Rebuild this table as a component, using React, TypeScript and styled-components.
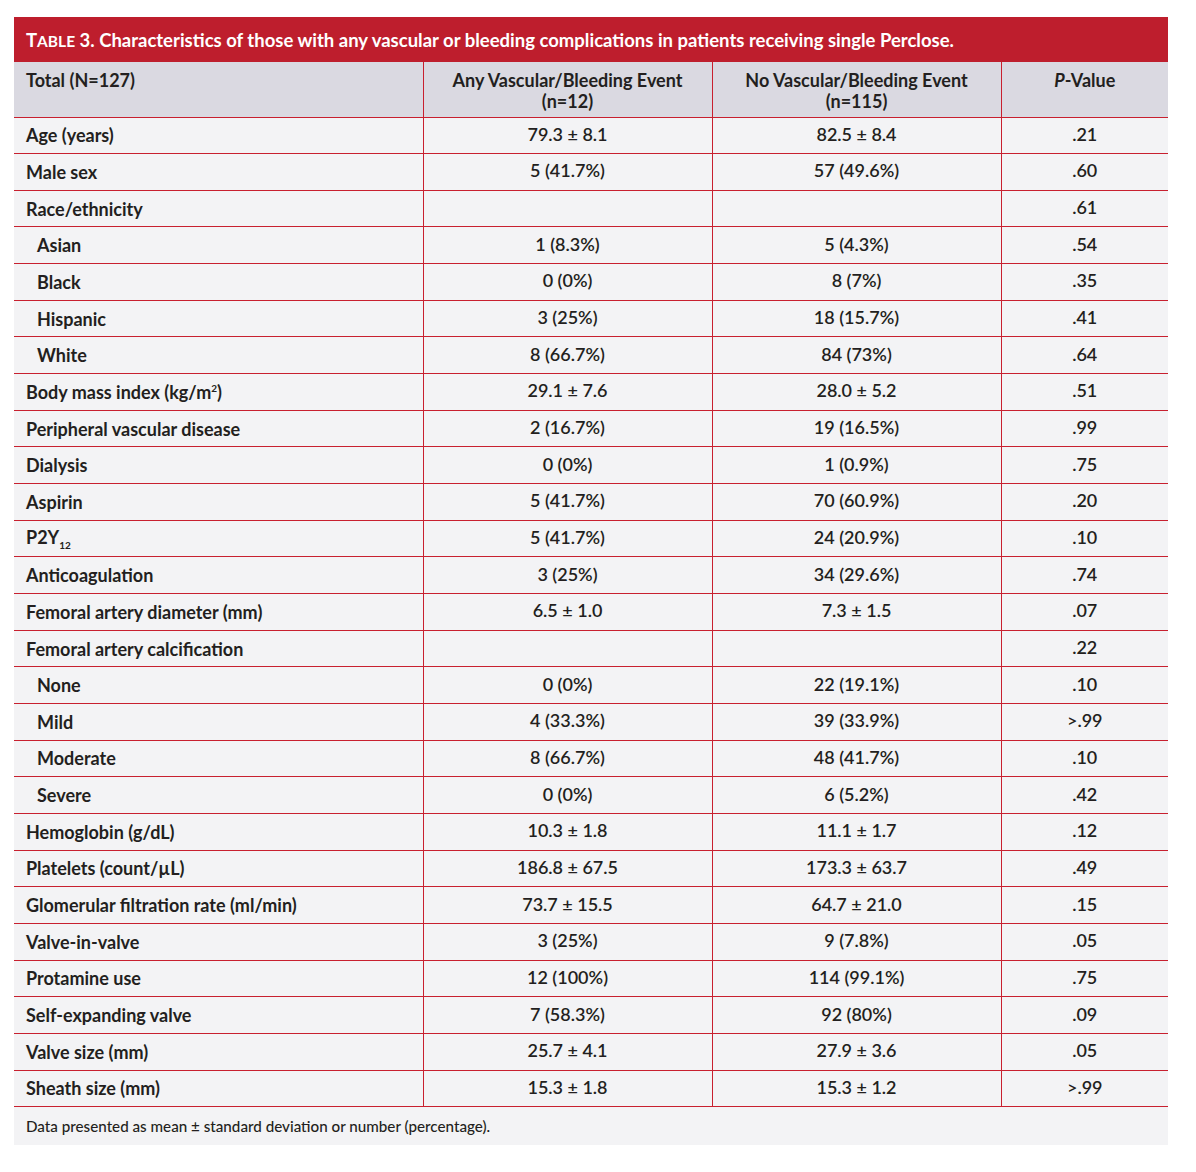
import styled, { createGlobalStyle } from "styled-components";

const GlobalStyle = createGlobalStyle`
  body {
    margin: 0;
    background: #ffffff;
    font-family: Lato, "Open Sans", sans-serif;
    color: #231f20;
  }
`;

const Page = styled.div`
  padding: 17px 28px 0 14px;
`;

const Card = styled.section`
  width: 1154px;
  background: #f3f3f5;
`;

const TitleBar = styled.h2`
  margin: 0;
  height: 45px;
  display: flex;
  align-items: center;
  padding: 0 12px;
  background: #be1e2d;
  color: #ffffff;
  font-size: 18.5px;
  font-weight: 700;
`;

const Label = styled.span`
  font-size: 15.5px;
`;

const Table = styled.table`
  width: 100%;
  border-collapse: collapse;
  table-layout: fixed;
`;

const HeadCell = styled.th<{ $left?: boolean }>`
  box-sizing: border-box;
  height: 55px;
  padding: 8px 12px 0;
  vertical-align: top;
  background: #dad9e1;
  font-size: 18px;
  font-weight: 700;
  line-height: 21px;
  text-align: ${(p) => (p.$left ? "left" : "center")};
  border-left: 1px solid #c8202f;
  border-bottom: 1px solid #c8202f;
  &:first-child {
    border-left: none;
  }
`;

const Row = styled.tr`
  height: 36.67px;
`;

const NameCell = styled.td<{ $indent?: boolean }>`
  box-sizing: border-box;
  padding: 0 0 0 ${(p) => (p.$indent ? 23 : 12)}px;
  font-size: 18px;
  font-weight: 700;
  border-bottom: 1px solid #c8202f;
`;

const ValueCell = styled.td`
  box-sizing: border-box;
  text-align: center;
  font-size: 18px;
  font-weight: 600;
  padding-bottom: 4px;
  border-left: 1px solid #c8202f;
  border-bottom: 1px solid #c8202f;
`;

const Note = styled.p`
  margin: 0;
  height: 38px;
  display: flex;
  align-items: center;
  padding: 0 12px;
  font-size: 15.2px;
  font-weight: 500;
`;

type Item = {
  name: React.ReactNode;
  a: string;
  b: string;
  p: string;
  indent?: boolean;
};

const rows: Item[] = [
  { name: "Age (years)", a: "79.3 ±  8.1", b: "82.5 ± 8.4", p: ".21" },
  { name: "Male sex", a: "5 (41.7%)", b: "57 (49.6%)", p: ".60" },
  { name: "Race/ethnicity", a: "", b: "", p: ".61" },
  { name: "Asian", a: "1 (8.3%)", b: "5 (4.3%)", p: ".54", indent: true },
  { name: "Black", a: "0 (0%)", b: "8 (7%)", p: ".35", indent: true },
  { name: "Hispanic", a: "3 (25%)", b: "18 (15.7%)", p: ".41", indent: true },
  { name: "White", a: "8 (66.7%)", b: "84 (73%)", p: ".64", indent: true },
  {
    name: (
      <>
        Body mass index (kg/m<sup style={{ fontSize: "10px" }}>2</sup>)
      </>
    ),
    a: "29.1 ± 7.6",
    b: "28.0 ± 5.2",
    p: ".51",
  },
  { name: "Peripheral vascular disease", a: "2 (16.7%)", b: "19 (16.5%)", p: ".99" },
  { name: "Dialysis", a: "0 (0%)", b: "1 (0.9%)", p: ".75" },
  { name: "Aspirin", a: "5 (41.7%)", b: "70 (60.9%)", p: ".20" },
  {
    name: (
      <>
        P2Y<sub style={{ fontSize: "10px" }}>12</sub>
      </>
    ),
    a: "5 (41.7%)",
    b: "24 (20.9%)",
    p: ".10",
  },
  { name: "Anticoagulation", a: "3 (25%)", b: "34 (29.6%)", p: ".74" },
  { name: "Femoral artery diameter (mm)", a: "6.5 ± 1.0", b: "7.3 ± 1.5", p: ".07" },
  { name: "Femoral artery calcification", a: "", b: "", p: ".22" },
  { name: "None", a: "0 (0%)", b: "22 (19.1%)", p: ".10", indent: true },
  { name: "Mild", a: "4 (33.3%)", b: "39 (33.9%)", p: ">.99", indent: true },
  { name: "Moderate", a: "8 (66.7%)", b: "48 (41.7%)", p: ".10", indent: true },
  { name: "Severe", a: "0 (0%)", b: "6 (5.2%)", p: ".42", indent: true },
  { name: "Hemoglobin (g/dL)", a: "10.3 ± 1.8", b: "11.1 ± 1.7", p: ".12" },
  { name: "Platelets (count/µL)", a: "186.8 ± 67.5", b: "173.3 ± 63.7", p: ".49" },
  { name: "Glomerular filtration rate (ml/min)", a: "73.7 ± 15.5", b: "64.7 ± 21.0", p: ".15" },
  { name: "Valve-in-valve", a: "3 (25%)", b: "9 (7.8%)", p: ".05" },
  { name: "Protamine use", a: "12 (100%)", b: "114 (99.1%)", p: ".75" },
  { name: "Self-expanding valve", a: "7 (58.3%)", b: "92 (80%)", p: ".09" },
  { name: "Valve size (mm)", a: "25.7 ± 4.1", b: "27.9 ± 3.6", p: ".05" },
  { name: "Sheath size (mm)", a: "15.3 ± 1.8", b: "15.3 ± 1.2", p: ">.99" },
];

export default function App() {
  return (
    <>
      <GlobalStyle />
      <Page>
        <Card>
          <TitleBar>
            <span>
              T<Label>ABLE</Label> 3. Characteristics of those with any vascular or bleeding
              complications in patients receiving single Perclose.
            </span>
          </TitleBar>
          <Table>
            <colgroup>
              <col style={{ width: 409 }} />
              <col style={{ width: 289 }} />
              <col style={{ width: 289 }} />
              <col style={{ width: 167 }} />
            </colgroup>
            <thead>
              <tr>
                <HeadCell $left>Total (N=127)</HeadCell>
                <HeadCell>
                  Any Vascular/Bleeding Event
                  <br />
                  (n=12)
                </HeadCell>
                <HeadCell>
                  No Vascular/Bleeding Event
                  <br />
                  (n=115)
                </HeadCell>
                <HeadCell>
                  <i>P</i>-Value
                </HeadCell>
              </tr>
            </thead>
            <tbody>
              {rows.map((r, i) => (
                <Row key={i}>
                  <NameCell $indent={r.indent}>{r.name}</NameCell>
                  <ValueCell>{r.a}</ValueCell>
                  <ValueCell>{r.b}</ValueCell>
                  <ValueCell>{r.p}</ValueCell>
                </Row>
              ))}
            </tbody>
          </Table>
          <Note>Data presented as mean ± standard deviation or number (percentage).</Note>
        </Card>
      </Page>
    </>
  );
}
